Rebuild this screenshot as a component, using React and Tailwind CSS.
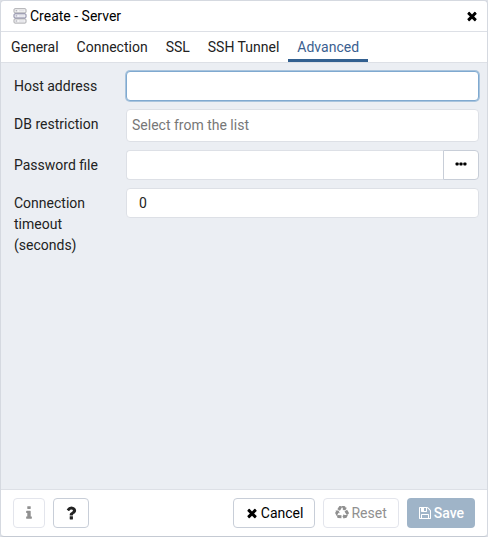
import React from "react";

const PATHS = {
  times:
    "M1490 1322q0 40-28 68l-136 136q-28 28-68 28t-68-28l-294-294-294 294q-28 28-68 28t-68-28l-136-136q-28-28-28-68t28-68l294-294-294-294q-28-28-28-68t28-68l136-136q28-28 68-28t68 28l294 294 294-294q28-28 68-28t68 28l136 136q28 28 28 68t-28 68l-294 294 294 294q28 28 28 68z",
  info:
    "M1216 1344v128q0 26-19 45t-45 19h-512q-26 0-45-19t-19-45v-128q0-26 19-45t45-19h64v-384h-64q-26 0-45-19t-19-45v-128q0-26 19-45t45-19h384q26 0 45 19t19 45v576h64q26 0 45 19t19 45zm-128-1152v192q0 26-19 45t-45 19h-256q-26 0-45-19t-19-45v-192q0-26 19-45t45-19h256q26 0 45 19t19 45z",
  question:
    "M1088 1256v240q0 16-12 28t-28 12h-240q-16 0-28-12t-12-28v-240q0-16 12-28t28-12h240q16 0 28 12t12 28zm316-600q0 54-15.5 101t-35 76.5-55 59.5-57.5 43.5-61 35.5q-41 23-68.5 65t-27.5 67q0 17-12 32.5t-28 15.5h-240q-15 0-25.5-18.5t-10.5-37.5v-45q0-83 65-156.5t143-108.5q59-27 84-56t25-76q0-42-46.5-74t-107.5-32q-65 0-108 29-35 25-107 115-13 16-31 16-12 0-25-8l-164-125q-13-10-15.5-25t5.5-28q160-266 464-266 80 0 161 31t146 83 106 127.5 41 158.5z",
  recycle:
    "M836 1169l-15 368-2 22-420-29q-36-3-67-31.5t-47-65.5q-11-27-14.5-55t4-65 12-55 21.5-64 19-53q78 12 509 28zm-387-586l180 379-147-92q-63 72-111.5 144.5t-72.5 125-39.5 94.5-18.5 63l-4 21-190-357q-17-26-18-56t6-47l8-18q35-63 114-188l-140-86zm1231 517l-188 359q-12 29-36.5 46.5t-43.5 20.5l-18 4q-71 7-219 12l8 164-230-367 211-362 7 173q170 16 283 5t170-33zm-785-924q-47 63-265 435l-317-187-19-12 225-356q20-31 60-45t80-10q24 2 48.5 12t42 21 41.5 33 36 34.5 36 39.5 32 35zm655 307l212 363q18 37 12.5 76t-27.5 74q-13 20-33 37t-38 28-48.5 22-47 16-51.5 14-46 12q-34-72-265-436l313-195zm-143-226l142-83-220 373-419-20 151-86q-34-89-75-166t-75.5-123.5-64.5-80-47-46.5l-17-13 405 1q31-3 58 10.5t39 28.5l11 15q39 56 112 192z",
  save:
    "M512 1536h768v-384h-768v384zm896 0h128v-896q0-14-10-38.5t-20-34.5l-281-281q-10-10-34-20t-39-10v416q0 40-28 68t-68 28h-576q-40 0-68-28t-28-68v-416h-128v1280h128v-416q0-40 28-68t68-28h832q40 0 68 28t28 68v416zm-384-928v-320q0-13-9.5-22.5t-22.5-9.5h-192q-13 0-22.5 9.5t-9.5 22.5v320q0 13 9.5 22.5t22.5 9.5h192q13 0 22.5-9.5t9.5-22.5zm640 32v928q0 40-28 68t-68 28h-1344q-40 0-68-28t-28-68v-1344q0-40 28-68t68-28h928q40 0 88 20t76 48l280 280q28 28 48 76t20 88z",
};

function Icon({ name, className }) {
  return (
    <svg viewBox="0 0 1792 1792" fill="currentColor" aria-hidden="true" className={className}>
      <path d={PATHS[name]} />
    </svg>
  );
}

function ServerIcon() {
  return (
    <svg viewBox="0 0 14 16" fill="none" aria-hidden="true" className="h-4 w-3.5 shrink-0">
      <rect x="1" y="0.7" width="12" height="4.2" rx="1" fill="#f5f5f6" stroke="#a9a9ad" />
      <rect x="1" y="10.9" width="12" height="4.2" rx="1" fill="#f5f5f6" stroke="#a9a9ad" />
      <rect x="1" y="5.8" width="12" height="4.2" rx="1" fill="#f1f1f8" stroke="#85859f" />
      <path d="M2.6 2.8h1.6M2.6 7.9h1.6M2.6 13h1.6" stroke="#9a9aa6" />
      <path d="M6 2.8h5.4M6 7.9h5.4M6 13h5.4" stroke="#dcdce2" />
    </svg>
  );
}

const TABS = ["General", "Connection", "SSL", "SSH Tunnel", "Advanced"];

function Row({ id, label, children }) {
  return (
    <div className="flex items-start">
      <label htmlFor={id} className="w-[112px] shrink-0 pt-[5px] pr-4 leading-[21px]">
        {label}
      </label>
      <div className="flex min-w-0 flex-1">{children}</div>
    </div>
  );
}

export default function App() {
  return (
    <div className="flex min-h-screen bg-[#dde0e6] font-['Roboto',sans-serif] text-sm text-[#222]">
      <div
        role="dialog"
        aria-labelledby="title"
        className="flex flex-1 flex-col overflow-hidden rounded border border-[#d5d9e0] border-b-[#c5cad3] bg-white"
      >
        <header className="flex h-[31px] items-center border-b border-[#dde0e6] pr-2 pl-3 text-black">
          <ServerIcon />
          <h1 id="title" className="ml-[3px] flex-1">Create - Server</h1>
          <button type="button" aria-label="Close">
            <Icon name="times" className="size-3.5" />
          </button>
        </header>

        <div role="tablist" className="flex h-[30px] px-px">
          {TABS.map((tab) => (
            <button
              key={tab}
              type="button"
              role="tab"
              aria-selected={tab === "Advanced"}
              className={
                tab === "Advanced"
                  ? "border-b-[3px] border-[#326090] px-[9px] pt-[3px] text-[#3a6090]"
                  : "border-b-[3px] border-transparent px-[9px] pt-[3px]"
              }
            >
              {tab}
            </button>
          ))}
        </div>

        <main className="flex flex-1 flex-col gap-2 border-t border-[#dde0e6] bg-[#ebeef3] pt-2 pr-2 pl-[13px]">
          <Row id="host" label="Host address">
            <input
              id="host"
              type="text"
              className="h-[30px] w-full rounded border border-[#7fa9d0] bg-white px-3 ring-1 ring-[#a9c4dd] outline-none"
            />
          </Row>
          <Row id="db" label="DB restriction">
            <input
              id="db"
              type="text"
              placeholder="Select from the list"
              className="h-[33px] w-full rounded border border-[#dde0e6] bg-white px-[5px] pb-[2px] outline-none placeholder:text-[#777]"
            />
          </Row>
          <Row id="passfile" label="Password file">
            <input
              id="passfile"
              type="text"
              className="h-[30px] min-w-0 flex-1 rounded-l border border-r-0 border-[#dde0e6] bg-white px-3 outline-none"
            />
            <button
              type="button"
              aria-label="Browse"
              className="flex h-[30px] w-9 items-center justify-center rounded-r border border-[#c8ced8] bg-white pb-0.5 text-black"
            >
              <svg viewBox="0 0 12 4" fill="currentColor" aria-hidden="true" className="h-1 w-3">
                <rect x="0.5" y="0.4" width="3.2" height="3.2" rx="1" />
                <rect x="4.4" y="0.4" width="3.2" height="3.2" rx="1" />
                <rect x="8.3" y="0.4" width="3.2" height="3.2" rx="1" />
              </svg>
            </button>
          </Row>
          <Row id="timeout" label="Connection timeout (seconds)">
            <input
              id="timeout"
              type="text"
              inputMode="numeric"
              defaultValue="0"
              className="h-[30px] w-full rounded border border-[#dde0e6] bg-white px-3 outline-none"
            />
          </Row>
        </main>

        <footer className="flex h-[47px] items-center gap-2 border-t border-[#dde0e6] px-3">
          <button
            type="button"
            disabled
            aria-label="Information"
            className="flex h-[30px] w-8 items-center justify-center rounded border border-[#e3e5ec] text-[#909090]"
          >
            <Icon name="info" className="size-4" />
          </button>
          <button
            type="button"
            aria-label="Help"
            className="flex h-[30px] w-9 items-center justify-center rounded border border-[#c8ced8]"
          >
            <Icon name="question" className="size-[18px]" />
          </button>
          <div className="flex-1" />
          <button
            type="button"
            className="flex h-[30px] items-center gap-0.5 rounded border border-[#c8ced8] px-[11px] text-black"
          >
            <Icon name="times" className="size-3.5" />
            Cancel
          </button>
          <button
            type="button"
            disabled
            className="flex h-[30px] items-center gap-0.5 rounded border border-[#e3e5ec] px-[11px] text-[#909090]"
          >
            <Icon name="recycle" className="size-3.5" />
            Reset
          </button>
          <button
            type="button"
            disabled
            className="flex h-[30px] items-center gap-0.5 rounded bg-[#9fb4c8] px-[11px] font-medium text-white"
          >
            <Icon name="save" className="size-3.5" />
            Save
          </button>
        </footer>
      </div>
    </div>
  );
}
